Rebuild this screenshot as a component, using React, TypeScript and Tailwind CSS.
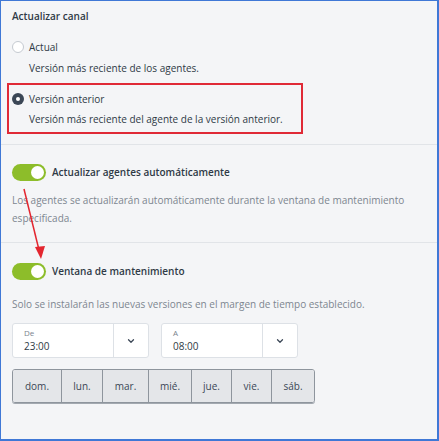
import { ChevronDown } from "lucide-react";

const days = [
  { label: "dom.", w: "w-[48px]" },
  { label: "lun.", w: "w-[41px]" },
  { label: "mar.", w: "w-[46px]" },
  { label: "mié.", w: "w-[43px]" },
  { label: "jue.", w: "w-[40px]" },
  { label: "vie.", w: "w-[40px]" },
  { label: "sáb.", w: "w-[43px]" },
];

function Radio({ checked }: { checked: boolean }) {
  return checked ? (
    <span className="w-[12px] h-[12px] rounded-full bg-[#3b4756] flex items-center justify-center shrink-0">
      <span className="w-[4px] h-[4px] rounded-full bg-white" />
    </span>
  ) : (
    <span className="w-[12px] h-[12px] rounded-full border border-[#c5cad1] bg-white shrink-0" />
  );
}

function Toggle() {
  return (
    <span className="w-[34px] h-[17px] rounded-full bg-[#8dbd2a] flex items-center justify-end px-[2px] shrink-0">
      <span className="w-[13px] h-[13px] rounded-full bg-white" />
    </span>
  );
}

function TimeSelect({ label, value }: { label: string; value: string }) {
  return (
    <div className="w-[137px] h-[35px] bg-white border border-[#dde1e6] rounded-[3px] flex">
      <div className="flex-1 pl-[11px] pt-[3px] flex flex-col">
        <span className="text-[8px] leading-[11px] text-[#7a838e]">{label}</span>
        <span className="text-[10px] leading-[16px] text-[#2f3a46]">{value}</span>
      </div>
      <div className="w-[35px] border-l border-[#dde1e6] flex items-center justify-center">
        <ChevronDown size={10} strokeWidth={3} className="text-[#3b4756]" />
      </div>
    </div>
  );
}

export default function App() {
  return (
    <div
      className="relative w-[439px] h-[441px] bg-[#f4f5f7] border-l border-t border-r-2 border-b-2 border-[#3f78d6] text-[#2f3a46] overflow-hidden text-[10px]"
      style={{ fontFamily: '"Open Sans", "Noto Sans", sans-serif' }}
    >
      <div className="px-[11px] pt-[6px] pb-[10px] border-b border-[#e1e4e8]">
        <div className="font-semibold leading-[18px]">Actualizar canal</div>
        <div className="mt-[13px]">
          <div className="flex items-center gap-[5px] h-[18px]">
            <Radio checked={false} />
            <span>Actual</span>
          </div>
          <div className="pl-[17px] mt-[3px] leading-[18px]">Versión más reciente de los agentes.</div>
        </div>
        <div className="mt-[6px] -mx-[5px] w-[296px] border-2 border-[#e02a36] pl-[3px] pt-[5px] pb-[4px]">
          <div className="flex items-center gap-[5px] h-[18px]">
            <Radio checked={true} />
            <span>Versión anterior</span>
          </div>
          <div className="pl-[17px] mt-[2px] leading-[18px]">
            Versión más reciente del agente de la versión anterior.
          </div>
        </div>
      </div>

      <div className="px-[11px] pt-[17px] pb-[15px] border-b border-[#e1e4e8]">
        <div className="flex items-center gap-[6px] h-[20px]">
          <Toggle />
          <span className="font-semibold">Actualizar agentes automáticamente</span>
        </div>
        <p className="mt-[9px] leading-[18px] text-[#7d8690]">
          Los agentes se actualizarán automáticamente durante la ventana de mantenimiento especificada.
        </p>
      </div>

      <div className="px-[11px] pt-[18px]">
        <div className="flex items-center gap-[6px] h-[20px]">
          <Toggle />
          <span className="font-semibold">Ventana de mantenimiento</span>
        </div>
        <p className="mt-[14px] leading-[18px] text-[#7d8690]">
          Solo se instalarán las nuevas versiones en el margen de tiempo establecido.
        </p>
        <div className="mt-[10px] flex gap-[12px]">
          <TimeSelect label="De" value="23:00" />
          <TimeSelect label="A" value="08:00" />
        </div>
        <div className="mt-[11px] flex w-fit border border-[#8e959d] rounded-[3px] overflow-hidden shadow-[0_1px_0_#a3a9b0]">
          {days.map((d, i) => (
            <div
              key={d.label}
              className={`h-[32px] flex items-center justify-center bg-[#e4e6e9] text-[#3b4756] ${d.w} ${
                i > 0 ? "border-l border-[#8e959d]" : ""
              }`}
            >
              {d.label}
            </div>
          ))}
        </div>
      </div>

      <svg className="absolute left-0 top-0 pointer-events-none" width="439" height="441">
        <line x1="23" y1="188" x2="38" y2="249" stroke="#e3262f" strokeWidth="1.5" />
        <polygon points="34,246 44,245 40,258" fill="#e3262f" />
      </svg>
    </div>
  );
}
